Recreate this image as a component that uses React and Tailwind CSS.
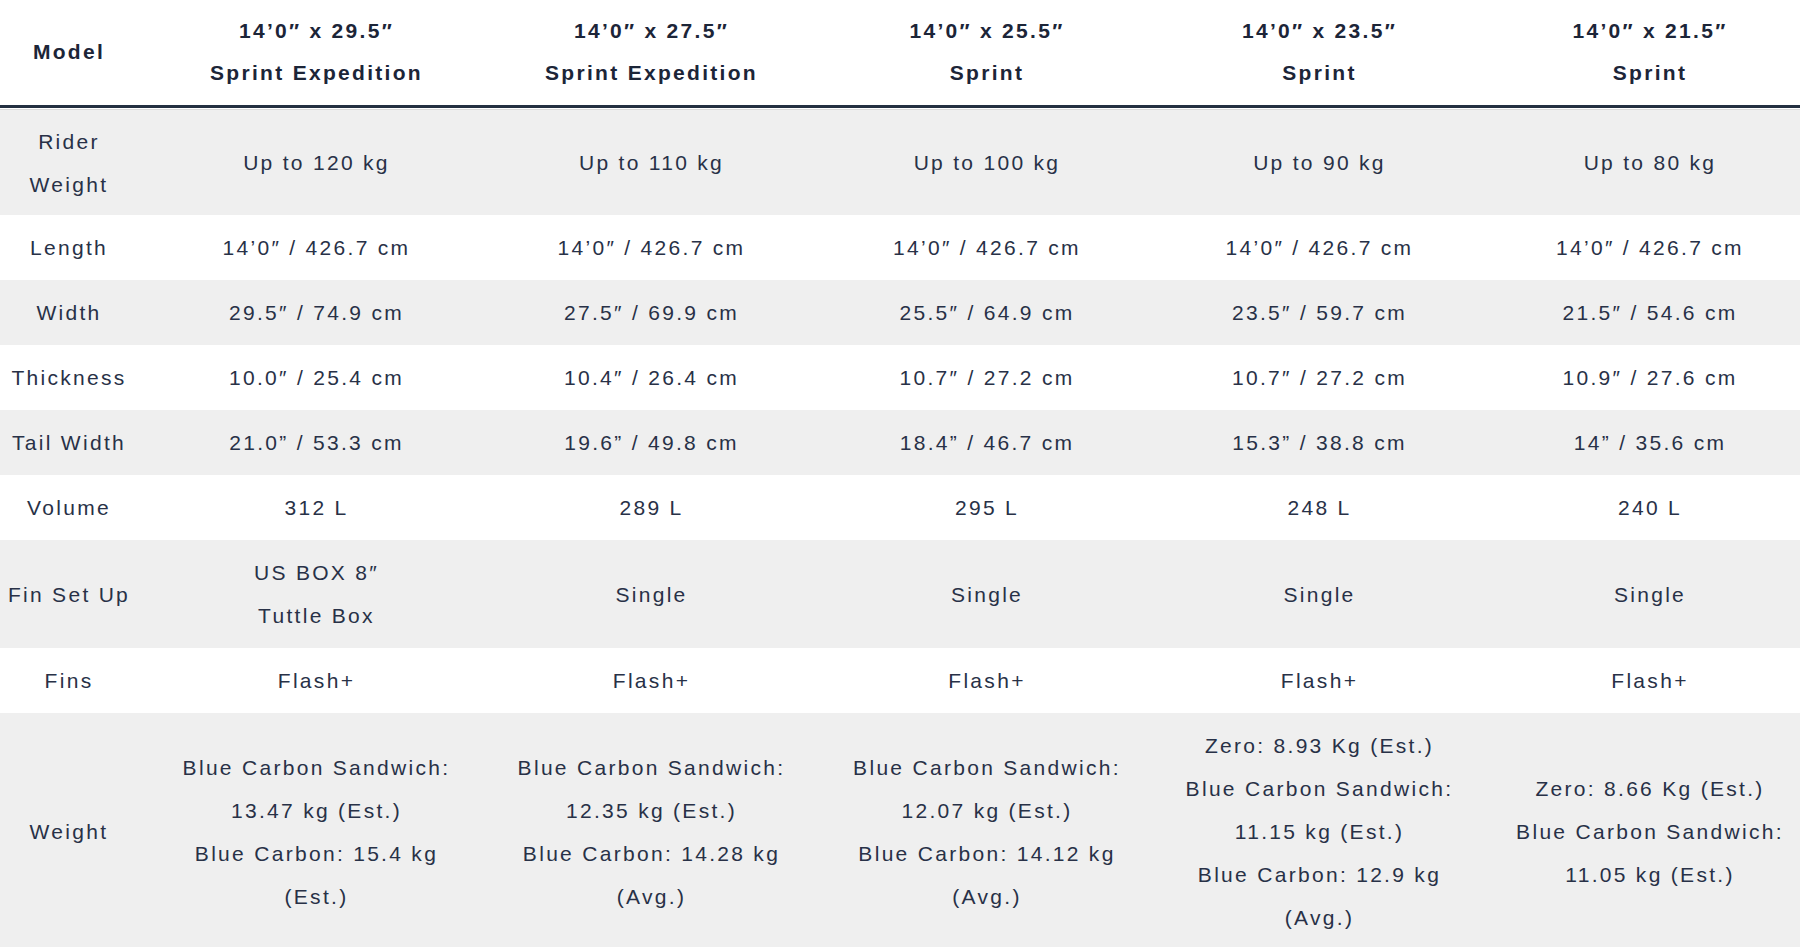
import React from "react";

const cols = "grid grid-cols-[150px_333px_337px_334px_331px_330px]";

const header = [
  ["14’0″ x 29.5″", "Sprint Expedition"],
  ["14’0″ x 27.5″", "Sprint Expedition"],
  ["14’0″ x 25.5″", "Sprint"],
  ["14’0″ x 23.5″", "Sprint"],
  ["14’0″ x 21.5″", "Sprint"],
];

const rows = [
  { label: ["Rider", "Weight"], gray: true, py: "py-[9.5px]", cells: [["Up to 120 kg"], ["Up to 110 kg"], ["Up to 100 kg"], ["Up to 90 kg"], ["Up to 80 kg"]] },
  { label: ["Length"], gray: false, cells: [["14’0″ / 426.7 cm"], ["14’0″ / 426.7 cm"], ["14’0″ / 426.7 cm"], ["14’0″ / 426.7 cm"], ["14’0″ / 426.7 cm"]] },
  { label: ["Width"], gray: true, cells: [["29.5″ / 74.9 cm"], ["27.5″ / 69.9 cm"], ["25.5″ / 64.9 cm"], ["23.5″ / 59.7 cm"], ["21.5″ / 54.6 cm"]] },
  { label: ["Thickness"], gray: false, cells: [["10.0″ / 25.4 cm"], ["10.4″ / 26.4 cm"], ["10.7″ / 27.2 cm"], ["10.7″ / 27.2 cm"], ["10.9″ / 27.6 cm"]] },
  { label: ["Tail Width"], gray: true, cells: [["21.0” / 53.3 cm"], ["19.6” / 49.8 cm"], ["18.4” / 46.7 cm"], ["15.3” / 38.8 cm"], ["14” / 35.6 cm"]] },
  { label: ["Volume"], gray: false, cells: [["312 L"], ["289 L"], ["295 L"], ["248 L"], ["240 L"]] },
  { label: ["Fin Set Up"], gray: true, cells: [["US BOX 8″", "Tuttle Box"], ["Single"], ["Single"], ["Single"], ["Single"]] },
  { label: ["Fins"], gray: false, cells: [["Flash+"], ["Flash+"], ["Flash+"], ["Flash+"], ["Flash+"]] },
  {
    label: ["Weight"],
    gray: true,
    cells: [
      ["Blue Carbon Sandwich:", "13.47 kg (Est.)", "Blue Carbon: 15.4 kg", "(Est.)"],
      ["Blue Carbon Sandwich:", "12.35 kg (Est.)", "Blue Carbon: 14.28 kg", "(Avg.)"],
      ["Blue Carbon Sandwich:", "12.07 kg (Est.)", "Blue Carbon: 14.12 kg", "(Avg.)"],
      ["Zero: 8.93 Kg (Est.)", "Blue Carbon Sandwich:", "11.15 kg (Est.)", "Blue Carbon: 12.9 kg", "(Avg.)"],
      ["Zero: 8.66 Kg (Est.)", "Blue Carbon Sandwich:", "11.05 kg (Est.)"],
    ],
  },
];

function Cell({ lines, extra = "" }) {
  return (
    <div className={`flex flex-col items-center justify-center text-center ${extra}`}>
      {lines.map((l, i) => (
        <div key={i} className="whitespace-nowrap">{l}</div>
      ))}
    </div>
  );
}

export default function App() {
  return (
    <div className="w-[1800px] h-[947px] overflow-hidden bg-white font-['Liberation_Sans',Arial,sans-serif] text-[21px] tracking-[2.3px]">
      <div className="w-[1815px]">
        <div className={`${cols} pt-[9.5px] pb-[11.5px] font-bold text-[#1c2538] leading-[42px]`}>
          <Cell lines={["Model"]} extra="pr-[12px]" />
          {header.map((h, i) => (
            <Cell key={i} lines={h} />
          ))}
        </div>
        <div className="h-[3px] bg-[#243041]" />
        <div className="h-px bg-white" />
        <div className="h-px bg-[#dadada]" />
        {rows.map((r, i) => (
          <div
            key={i}
            className={`${cols} ${r.gray ? "bg-[#efefef]" : "bg-white"} ${r.py || "py-[11px]"} text-[#283147] leading-[43px]`}
          >
            <Cell lines={r.label} extra="pr-[12px]" />
            {r.cells.map((c, j) => (
              <Cell key={j} lines={c} />
            ))}
          </div>
        ))}
      </div>
    </div>
  );
}
